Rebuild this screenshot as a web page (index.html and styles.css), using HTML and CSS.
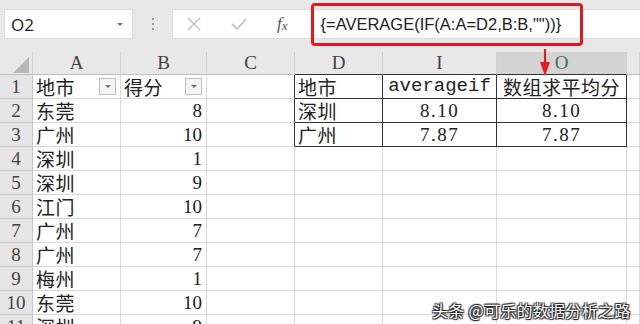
FILE: index.html
```html
<!DOCTYPE html>
<html lang="zh">
<head>
<meta charset="utf-8">
<link rel="stylesheet" href="styles.css">
</head>
<body>
<div class="toolbar">
  <div class="namebox"><span class="name">O2</span><span class="nb-arrow"></span></div>
  <div class="grip"><i></i><i></i><i></i></div>
  <div class="fxbar">
    <span class="tool x">
      <svg width="16" height="16" viewBox="0 0 16 16"><path d="M2 2 L14 14 M14 2 L2 14" stroke="#c4c4c4" stroke-width="1.6" fill="none"/></svg>
    </span>
    <span class="tool ok">
      <svg width="18" height="16" viewBox="0 0 18 16"><path d="M2 8 L7 13 L16 3" stroke="#c4c4c4" stroke-width="1.8" fill="none"/></svg>
    </span>
    <span class="tool fx"><i>f</i><i class="sub">x</i></span>
    <span class="formula">{=AVERAGE(IF(A:A=D2,B:B,""))}</span>
  </div>
  <div class="redbox"></div>
</div>

<table class="sheet">
  <colgroup>
    <col class="c-rh"><col class="c-a"><col class="c-b"><col class="c-c"><col class="c-d"><col class="c-i"><col class="c-o"><col class="c-x">
  </colgroup>
  <tr class="hdr">
    <th class="corner"><span class="tri"></span></th>
    <th>A</th><th>B</th><th>C</th><th class="dk-b">D</th><th class="dk-b">I</th><th class="dk-b sel">O</th><th></th>
  </tr>
  <tr>
    <th>1</th>
    <td><div class="fcell"><span class="cn">地市</span><span class="filter"></span></div></td>
    <td><div class="fcell"><span class="cn">得分</span><span class="filter"></span></div></td>
    <td class="dk-r"></td>
    <td class="dk"><span class="cn">地市</span></td>
    <td class="dk ctr mono">averageif</td>
    <td class="dk ctr"><span class="cn">数组求平均分</span></td>
    <td></td>
  </tr>
  <tr>
    <th>2</th>
    <td><span class="cn">东莞</span></td><td class="num">8</td><td class="dk-r"></td>
    <td class="dk"><span class="cn">深圳</span></td><td class="dk ctr dec">8.10</td><td class="dk ctr dec">8.10</td><td></td>
  </tr>
  <tr>
    <th>3</th>
    <td><span class="cn">广州</span></td><td class="num">10</td><td class="dk-r"></td>
    <td class="dk"><span class="cn">广州</span></td><td class="dk ctr dec">7.87</td><td class="dk ctr dec">7.87</td><td></td>
  </tr>
  <tr>
    <th>4</th>
    <td><span class="cn">深圳</span></td><td class="num">1</td><td></td><td></td><td></td><td></td><td></td>
  </tr>
  <tr>
    <th>5</th>
    <td><span class="cn">深圳</span></td><td class="num">9</td><td></td><td></td><td></td><td></td><td></td>
  </tr>
  <tr>
    <th>6</th>
    <td><span class="cn">江门</span></td><td class="num">10</td><td></td><td></td><td></td><td></td><td></td>
  </tr>
  <tr>
    <th>7</th>
    <td><span class="cn">广州</span></td><td class="num">7</td><td></td><td></td><td></td><td></td><td></td>
  </tr>
  <tr>
    <th>8</th>
    <td><span class="cn">广州</span></td><td class="num">7</td><td></td><td></td><td></td><td></td><td></td>
  </tr>
  <tr>
    <th>9</th>
    <td><span class="cn">梅州</span></td><td class="num">1</td><td></td><td></td><td></td><td></td><td></td>
  </tr>
  <tr>
    <th>10</th>
    <td><span class="cn">东莞</span></td><td class="num">10</td><td></td><td></td><td></td><td></td><td></td>
  </tr>
  <tr>
    <th>11</th>
    <td><span class="cn">深圳</span></td><td class="num">9</td><td></td><td></td><td></td><td></td><td></td>
  </tr>
</table>

<svg class="arrow" width="14" height="28" viewBox="0 0 14 28">
  <path d="M7 0 L7 16" stroke="#e02020" stroke-width="2.2"/>
  <path d="M2 13 L12 13 L7 27 Z" fill="#e02020"/>
</svg>

<div class="watermark">头条 @可乐的数据分析之路</div>
</body>
</html>
```

FILE: styles.css
```css
html, body {
  margin: 0;
  padding: 0;
}
body {
  width: 640px;
  height: 324px;
  overflow: hidden;
  position: relative;
  background: #ffffff;
  font-family: "Liberation Serif", "Noto Sans CJK SC", serif;
  color: #222;
}

/* ---------- toolbar ---------- */
.toolbar {
  position: relative;
  height: 52px;
  box-sizing: border-box;
  background: #e8e8e8;
  display: flex;
  align-items: flex-start;
  padding: 9px 0 0 4px;
}
.namebox {
  width: 129px;
  height: 30px;
  box-sizing: border-box;
  background: #fff;
  border: 1px solid #dcdcdc;
  display: flex;
  align-items: center;
  justify-content: space-between;
  padding: 0 9px 0 6px;
}
.name {
  font-family: "Open Sans", "Liberation Sans", sans-serif;
  font-size: 17px;
  color: #222;
}
.nb-arrow {
  width: 0;
  height: 0;
  border-left: 3px solid transparent;
  border-right: 3px solid transparent;
  border-top: 3px solid #777;
}
.grip {
  width: 39px;
  height: 30px;
  display: flex;
  flex-direction: column;
  align-items: center;
  justify-content: center;
  gap: 3px;
}
.grip i {
  width: 2px;
  height: 2px;
  background: #9a9a9a;
  display: block;
}
.fxbar {
  flex: 1;
  height: 30px;
  background: #fff;
  border: 1px solid #dcdcdc;
  border-right: none;
  box-sizing: border-box;
  display: flex;
  align-items: center;
}
.tool {
  display: flex;
  align-items: center;
  justify-content: center;
}
.tool.x { width: 16px; margin-left: 13px; }
.tool.ok { width: 18px; margin-left: 28px; }
.tool.fx {
  margin-left: 29px;
  font-family: "Liberation Serif", serif;
  font-size: 17px;
  color: #555;
}
.tool.fx .sub { font-size: 13px; margin-top: 4px; }
.formula {
  margin-left: 33px;
  font-family: "Liberation Sans", sans-serif;
  font-size: 16.5px;
  color: #222;
  white-space: pre;
}
.redbox {
  position: absolute;
  left: 311px;
  top: 3px;
  width: 272px;
  height: 43px;
  box-sizing: border-box;
  border: 3px solid #e5191c;
  border-radius: 4px;
}

/* ---------- sheet ---------- */
.sheet {
  table-layout: fixed;
  border-collapse: separate;
  border-spacing: 0;
  width: 640px;
}
.c-rh { width: 33px; }
.c-a { width: 88px; }
.c-b { width: 86px; }
.c-c { width: 88px; }
.c-d { width: 88px; }
.c-i { width: 114px; }
.c-o { width: 130px; }
.c-x { width: 13px; }

.sheet td, .sheet th {
  padding: 0;
  box-sizing: border-box;
  height: 24px;
  border-right: 1px solid #d9d9d9;
  border-bottom: 1px solid #d9d9d9;
  white-space: nowrap;
  line-height: 23px;
}
.sheet tr.hdr th { height: 23px; line-height: 22px; }
.sheet th {
  background: #e6e6e6;
  font-weight: normal;
  font-family: "Liberation Serif", serif;
  font-size: 19px;
  color: #444;
  text-align: center;
  border-right-color: #c6c6c6;
  border-bottom-color: #c6c6c6;
}
.sheet tr.hdr th {
  background: #e8e8e8;
  border-right-color: #d2d2d2;
  border-bottom-color: #bfbfbf;
}
.sheet tr.hdr th.sel {
  background: #d4d4d4;
  color: #3f6f50;
}
.sheet th.corner {
  padding: 0;
}
.tri {
  display: block;
  width: 0;
  height: 0;
  margin: 3px 3px 0 auto;
  border-left: 16px solid transparent;
  border-bottom: 16px solid #b8b8b8;
}

.sheet td {
  font-size: 19px;
  padding: 0 3px;
  vertical-align: top;
}
.cn {
  display: inline-block;
  vertical-align: top;
  height: 23px;
  line-height: 23px;
  font-family: "Noto Sans CJK SC", sans-serif;
  font-size: 19px;
  color: #222;
  letter-spacing: 0.5px;
}
.num {
  text-align: right;
  font-family: "Liberation Serif", serif;
  font-size: 19px;
  padding-right: 4px !important;
}
.ctr { text-align: center; }
.mono {
  font-family: "Liberation Mono", monospace;
  font-size: 16px;
}
.dec {
  font-family: "Liberation Serif", serif;
  font-size: 19px;
  letter-spacing: 1.5px;
}
.fcell {
  display: flex;
  align-items: center;
  justify-content: space-between;
  height: 23px;
}
.filter {
  width: 17px;
  height: 17px;
  box-sizing: border-box;
  border: 1px solid #c0c0c0;
  background: #f4f4f4;
  display: flex;
  align-items: center;
  justify-content: center;
  margin-right: 1px;
}
.filter::after {
  content: "";
  width: 0;
  height: 0;
  border-left: 3px solid transparent;
  border-right: 3px solid transparent;
  border-top: 3px solid #777;
}
.sheet .dk {
  border-right-color: #333;
  border-bottom-color: #333;
}
.sheet .dk-r { border-right-color: #333; }
.sheet .dk-b { border-bottom-color: #333 !important; }

/* ---------- overlays ---------- */
.arrow {
  position: absolute;
  left: 538px;
  top: 49px;
}
.watermark {
  position: absolute;
  left: 432px;
  top: 298px;
  font-family: "Noto Sans CJK SC", sans-serif;
  font-size: 16px;
  color: #fff;
  letter-spacing: 0.3px;
  text-shadow: 0 0 1px #222, 1px 1px 1px #222, -1px -1px 1px #333, 1px -1px 1px #333, -1px 1px 1px #333;
}
```
